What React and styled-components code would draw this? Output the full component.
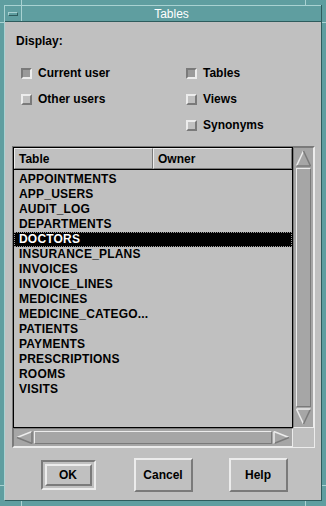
import styled, { createGlobalStyle } from 'styled-components';

const teal = '#5f9ea0';
const tealLight = '#a9d2d2';
const tealDark = '#2e5c5d';
const gray = '#c0c0c0';
const hi = '#ececec';
const lo = '#7a7a7a';
const trough = '#a6a6a6';

const bevel = (raised) =>
  raised
    ? `border-color: ${hi} ${lo} ${lo} ${hi};`
    : `border-color: ${lo} ${hi} ${hi} ${lo};`;

const GlobalStyle = createGlobalStyle`
  html, body {
    margin: 0;
    padding: 0;
    background: ${teal};
  }
  body {
    font-family: "Liberation Sans", Arial, sans-serif;
  }
  * {
    box-sizing: border-box;
  }
`;

const Window = styled.div`
  position: relative;
  width: 326px;
  height: 506px;
  padding: 5px 4px 5px 4px;
  background: ${teal};
  display: flex;
  flex-direction: column;

  /* resize handle marks on the frame edges */
  &::before {
    content: '';
    position: absolute;
    top: 0;
    bottom: 0;
    left: 21px;
    right: 20px;
    border-left: 1px solid ${tealLight};
    border-right: 1px solid ${tealLight};
  }
  &::after {
    content: '';
    position: absolute;
    left: 0;
    right: 0;
    top: 22px;
    bottom: 20px;
    border-top: 1px solid ${tealLight};
    border-bottom: 1px solid ${tealLight};
  }
`;

const Frame = styled.div`
  position: relative;
  z-index: 1;
  flex: 1;
  display: flex;
  flex-direction: column;
  border-left: 1px solid ${tealLight};
  border-right: 1px solid ${tealDark};
  border-bottom: 1px solid ${tealDark};
`;

const TitleBar = styled.div`
  height: 17px;
  display: flex;
  background: ${teal};
  border-top: 1px solid ${tealLight};
  border-bottom: 1px solid ${tealDark};
`;

const MenuButton = styled.div`
  width: 17px;
  display: flex;
  align-items: center;
  justify-content: center;
  border-right: 1px solid ${tealLight};
`;

const MenuGlyph = styled.div`
  width: 10px;
  height: 4px;
  border: 1px solid;
  border-color: ${tealLight} ${tealDark} ${tealDark} ${tealLight};
`;

const Title = styled.div`
  flex: 1;
  text-align: center;
  color: #ffffff;
  font-size: 12px;
  line-height: 16px;
`;

const Content = styled.div`
  flex: 1;
  background: ${gray};
  display: flex;
  flex-direction: column;
  padding-top: 12px;
`;

const Label = styled.div`
  margin-left: 11px;
  font-size: 12px;
  font-weight: bold;
  line-height: 14px;
  color: #000;
`;

const Toggles = styled.div`
  display: flex;
  margin: 12px 0 0 16px;
`;

const ToggleColumn = styled.div`
  width: ${(p) => p.$width || 'auto'};
  display: flex;
  flex-direction: column;
`;

const Toggle = styled.div`
  height: 26px;
  display: flex;
  align-items: center;
  gap: 6px;
  font-size: 12px;
  font-weight: bold;
  line-height: 14px;
  color: #000;
`;

const CheckBox = styled.span`
  width: 11px;
  height: 11px;
  border: 2px solid;
  ${(p) => bevel(!p.$checked)}
  background: ${(p) => (p.$checked ? '#9a9a9a' : gray)};
`;

const ScrolledWindow = styled.div`
  margin: 8px 0 0 7px;
  width: 303px;
  height: 302px;
  border: 1px solid;
  ${bevel(false)}
  display: grid;
  grid-template-columns: 280px 21px;
  grid-template-rows: 281px 19px;
`;

const List = styled.div`
  border: 1px solid #000;
  display: flex;
  flex-direction: column;
  background: ${gray};
  overflow: hidden;
`;

const Header = styled.div`
  display: flex;
  border-bottom: 1px solid #000;
`;

const HeaderCell = styled.div`
  width: ${(p) => p.$width}px;
  height: 21px;
  padding-left: 4px;
  border: 1px solid;
  ${bevel(true)}
  display: flex;
  align-items: center;
  font-size: 12px;
  font-weight: bold;
  color: #000;
`;

const Rows = styled.div`
  padding-top: 2px;
  display: flex;
  flex-direction: column;
`;

const Row = styled.div`
  height: 15px;
  line-height: 15px;
  padding-left: 5px;
  font-size: 12px;
  font-weight: bold;
  letter-spacing: 0.2px;
  white-space: nowrap;
  color: ${(p) => (p.$selected ? '#fff' : '#000')};
  background: ${(p) => (p.$selected ? '#000' : 'transparent')};
  outline: ${(p) => (p.$selected ? '1px dotted #9a9a9a' : 'none')};
  outline-offset: -1px;
`;

const ScrollBar = styled.div`
  display: flex;
  flex-direction: ${(p) => (p.$vertical ? 'column' : 'row')};
  gap: 1px;
  padding: 2px;
  border: 1px solid;
  ${bevel(false)}
  background: ${trough};
`;

const Slider = styled.div`
  flex: 1;
  border: 1px solid;
  ${bevel(true)}
  background: ${trough};
`;

const Corner = styled.div`
  background: ${gray};
`;

const ArrowBox = styled.svg`
  display: block;
  flex: none;
`;

const Arrow = ({ dir }) => {
  // 15 x 17 for vertical arrows, 17 x 13 for horizontal
  if (dir === 'up' || dir === 'down') {
    const up = dir === 'up';
    const apex = up ? 1 : 16;
    const base = up ? 16 : 1;
    return (
      <ArrowBox width="15" height="17" viewBox="0 0 15 17">
        <polygon points={`7.5,${apex} 0.5,${base} 14.5,${base}`} fill={trough} />
        <line x1="7.5" y1={apex} x2="0.5" y2={base} stroke={hi} strokeWidth="1.5" />
        <line x1="7.5" y1={apex} x2="14.5" y2={base} stroke={lo} strokeWidth="1.5" />
        <line x1="0.5" y1={base} x2="14.5" y2={base} stroke={up ? lo : hi} strokeWidth="1.5" />
      </ArrowBox>
    );
  }
  const left = dir === 'left';
  const apex = left ? 1 : 16;
  const base = left ? 16 : 1;
  return (
    <ArrowBox width="17" height="13" viewBox="0 0 17 13">
      <polygon points={`${apex},6.5 ${base},0.5 ${base},12.5`} fill={trough} />
      <line x1={apex} y1="6.5" x2={base} y2="0.5" stroke={hi} strokeWidth="1.5" />
      <line x1={apex} y1="6.5" x2={base} y2="12.5" stroke={lo} strokeWidth="1.5" />
      <line x1={base} y1="0.5" x2={base} y2="12.5" stroke={left ? lo : hi} strokeWidth="1.5" />
    </ArrowBox>
  );
};

const ButtonRow = styled.div`
  margin-top: 10px;
  display: flex;
  justify-content: center;
  gap: 36px;
`;

const ButtonSlot = styled.div`
  width: 59px;
  height: 34px;
  display: flex;
  align-items: center;
  justify-content: center;
`;

const DefaultRing = styled.div`
  width: 55px;
  height: 30px;
  padding: 2px;
  border: 2px solid;
  ${bevel(false)}
  display: flex;
`;

const Button = styled.button`
  width: ${(p) => (p.$inRing ? '47px' : '59px')};
  height: ${(p) => (p.$inRing ? '22px' : '34px')};
  margin: 0;
  padding: 0;
  border: 2px solid;
  ${bevel(true)}
  background: ${gray};
  font-family: "Liberation Sans", Arial, sans-serif;
  font-size: 12px;
  font-weight: bold;
  color: #000;
`;

const tables = [
  'APPOINTMENTS',
  'APP_USERS',
  'AUDIT_LOG',
  'DEPARTMENTS',
  'DOCTORS',
  'INSURANCE_PLANS',
  'INVOICES',
  'INVOICE_LINES',
  'MEDICINES',
  'MEDICINE_CATEGO...',
  'PATIENTS',
  'PAYMENTS',
  'PRESCRIPTIONS',
  'ROOMS',
  'VISITS',
];

export default function App() {
  return (
    <>
      <GlobalStyle />
      <Window>
        <Frame>
          <TitleBar>
            <MenuButton>
              <MenuGlyph />
            </MenuButton>
            <Title>Tables</Title>
          </TitleBar>
          <Content>
            <Label>Display:</Label>
            <Toggles>
              <ToggleColumn $width="165px">
                <Toggle>
                  <CheckBox $checked />
                  Current user
                </Toggle>
                <Toggle>
                  <CheckBox />
                  Other users
                </Toggle>
              </ToggleColumn>
              <ToggleColumn>
                <Toggle>
                  <CheckBox $checked />
                  Tables
                </Toggle>
                <Toggle>
                  <CheckBox />
                  Views
                </Toggle>
                <Toggle>
                  <CheckBox />
                  Synonyms
                </Toggle>
              </ToggleColumn>
            </Toggles>

            <ScrolledWindow>
              <List>
                <Header>
                  <HeaderCell $width={139}>Table</HeaderCell>
                  <HeaderCell $width={139}>Owner</HeaderCell>
                </Header>
                <Rows>
                  {tables.map((name) => (
                    <Row key={name} $selected={name === 'DOCTORS'}>
                      {name}
                    </Row>
                  ))}
                </Rows>
              </List>
              <ScrollBar $vertical>
                <Arrow dir="up" />
                <Slider />
                <Arrow dir="down" />
              </ScrollBar>
              <ScrollBar>
                <Arrow dir="left" />
                <Slider />
                <Arrow dir="right" />
              </ScrollBar>
              <Corner />
            </ScrolledWindow>

            <ButtonRow>
              <ButtonSlot>
                <DefaultRing>
                  <Button $inRing>OK</Button>
                </DefaultRing>
              </ButtonSlot>
              <ButtonSlot>
                <Button>Cancel</Button>
              </ButtonSlot>
              <ButtonSlot>
                <Button>Help</Button>
              </ButtonSlot>
            </ButtonRow>
          </Content>
        </Frame>
      </Window>
    </>
  );
}
